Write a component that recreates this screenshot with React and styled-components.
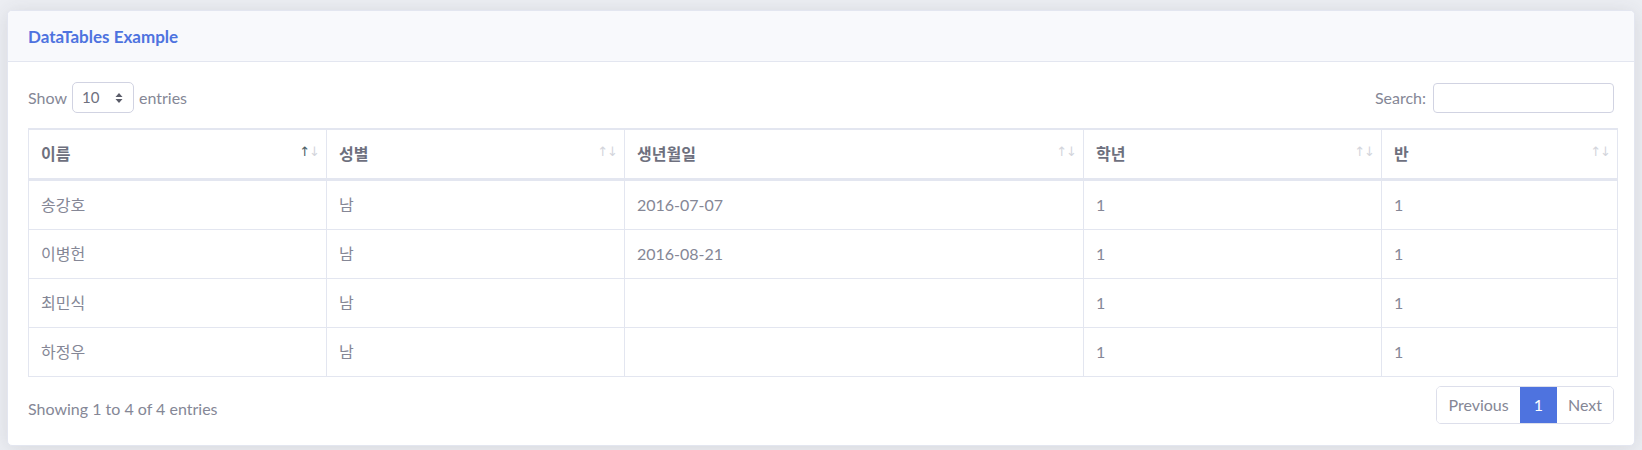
import React from 'react';
import styled, { createGlobalStyle } from 'styled-components';

const GlobalStyle = createGlobalStyle`
  * { box-sizing: border-box; }
  body {
    margin: 0;
    background: #eceef3;
    font-family: 'Lato', 'Noto Sans CJK KR', sans-serif;
    font-size: 16px;
    line-height: 1.5;
    color: #858796;
  }
`;

const Page = styled.div`
  padding: 10px 7px 7px;
`;

const Card = styled.div`
  background: #fff;
  border: 1px solid #e3e6f0;
  border-radius: 5px;
  box-shadow: 0 2px 20px 0 rgba(58, 59, 69, 0.12);
  overflow: hidden;
`;

const CardHeader = styled.div`
  background: #f8f9fc;
  border-bottom: 1px solid #e3e6f0;
  padding: 13px 20px 12px;
`;

const Title = styled.h6`
  margin: 0;
  font-size: 17px;
  font-weight: 700;
  line-height: 25px;
  color: #4e73df;
`;

const CardBody = styled.div`
  padding: 20px 20px 21px;
`;

const TopBar = styled.div`
  display: flex;
  justify-content: space-between;
  align-items: center;
  margin-bottom: 15px;
`;

const Label = styled.label`
  display: flex;
  align-items: center;
  gap: 5px;
  font-size: 16px;
`;

const SelectBox = styled.div`
  width: 62px;
  height: 31px;
  border: 1px solid #d1d3e2;
  border-radius: 5px;
  display: flex;
  align-items: center;
  justify-content: space-between;
  padding: 0 10px 0 9px;
  color: #6e707e;
  font-size: 15px;
`;

const SearchInput = styled.input`
  width: 181px;
  height: 30px;
  border: 1px solid #d1d3e2;
  border-radius: 4px;
  margin-left: 2px;
  outline: none;
`;

const Table = styled.table`
  width: 100%;
  border-collapse: collapse;
  table-layout: fixed;
  border: 1px solid #e3e6f0;
`;

const Th = styled.th`
  position: relative;
  text-align: left;
  font-weight: 700;
  color: #6e707e;
  padding: 12px 12px;
  border: 1px solid #e3e6f0;
  border-bottom: 3px solid #e3e6f0;
  border-top-width: 2px;
  font-size: 16px;
`;

const Arrows = styled.span`
  position: absolute;
  right: 7px;
  top: 12px;
  font-size: 13px;
  letter-spacing: -1px;
  font-family: 'DejaVu Sans', sans-serif;
  font-weight: 400;
`;

const Arrow = styled.span`
  color: ${(p) => (p.$active ? '#4d5f66' : '#d3d5dc')};
`;

const Td = styled.td`
  padding: 12px 12px;
  border: 1px solid #e3e6f0;
  font-size: 16px;
  height: 49px;
`;

const Footer = styled.div`
  display: flex;
  justify-content: space-between;
  align-items: center;
  margin-top: 9px;
`;

const Info = styled.div`
  font-size: 16px;
  padding-top: 8px;
`;

const Pagination = styled.div`
  display: flex;
  border: 1px solid #dddfeb;
  border-radius: 5px;
  overflow: hidden;
`;

const PageLink = styled.span`
  height: 36px;
  display: flex;
  align-items: center;
  padding: 0 ${(p) => p.$pad}px;
  font-size: 16px;
  color: ${(p) => (p.$active ? '#fff' : '#858796')};
  background: ${(p) => (p.$active ? '#4e73df' : '#fff')};
`;

const columns = [
  { name: '이름', width: 298, active: true },
  { name: '성별', width: 298 },
  { name: '생년월일', width: 459 },
  { name: '학년', width: 298 },
  { name: '반', width: 236 },
];

const rows = [
  ['송강호', '남', '2016-07-07', '1', '1'],
  ['이병헌', '남', '2016-08-21', '1', '1'],
  ['최민식', '남', '', '1', '1'],
  ['하정우', '남', '', '1', '1'],
];

export default function App() {
  return (
    <Page>
      <GlobalStyle />
      <Card>
        <CardHeader>
          <Title>DataTables Example</Title>
        </CardHeader>
        <CardBody>
          <TopBar>
            <Label>
              Show
              <SelectBox>
                10
                <svg width="8" height="12" viewBox="0 0 8 12">
                  <path d="M4 1 L7.5 5 H0.5 Z M4 11 L7.5 7 H0.5 Z" fill="#5a5c69" />
                </svg>
              </SelectBox>
              entries
            </Label>
            <Label>
              Search:
              <SearchInput type="search" />
            </Label>
          </TopBar>
          <Table>
            <colgroup>
              {columns.map((c) => (
                <col key={c.name} style={{ width: c.width }} />
              ))}
            </colgroup>
            <thead>
              <tr>
                {columns.map((c) => (
                  <Th key={c.name}>
                    {c.name}
                    <Arrows>
                      <Arrow $active={c.active}>↑</Arrow>
                      <Arrow>↓</Arrow>
                    </Arrows>
                  </Th>
                ))}
              </tr>
            </thead>
            <tbody>
              {rows.map((r) => (
                <tr key={r[0]}>
                  {r.map((v, i) => (
                    <Td key={i}>{v}</Td>
                  ))}
                </tr>
              ))}
            </tbody>
          </Table>
          <Footer>
            <Info>Showing 1 to 4 of 4 entries</Info>
            <Pagination>
              <PageLink $pad={11}>Previous</PageLink>
              <PageLink $pad={14} $active>1</PageLink>
              <PageLink $pad={11}>Next</PageLink>
            </Pagination>
          </Footer>
        </CardBody>
      </Card>
    </Page>
  );
}
